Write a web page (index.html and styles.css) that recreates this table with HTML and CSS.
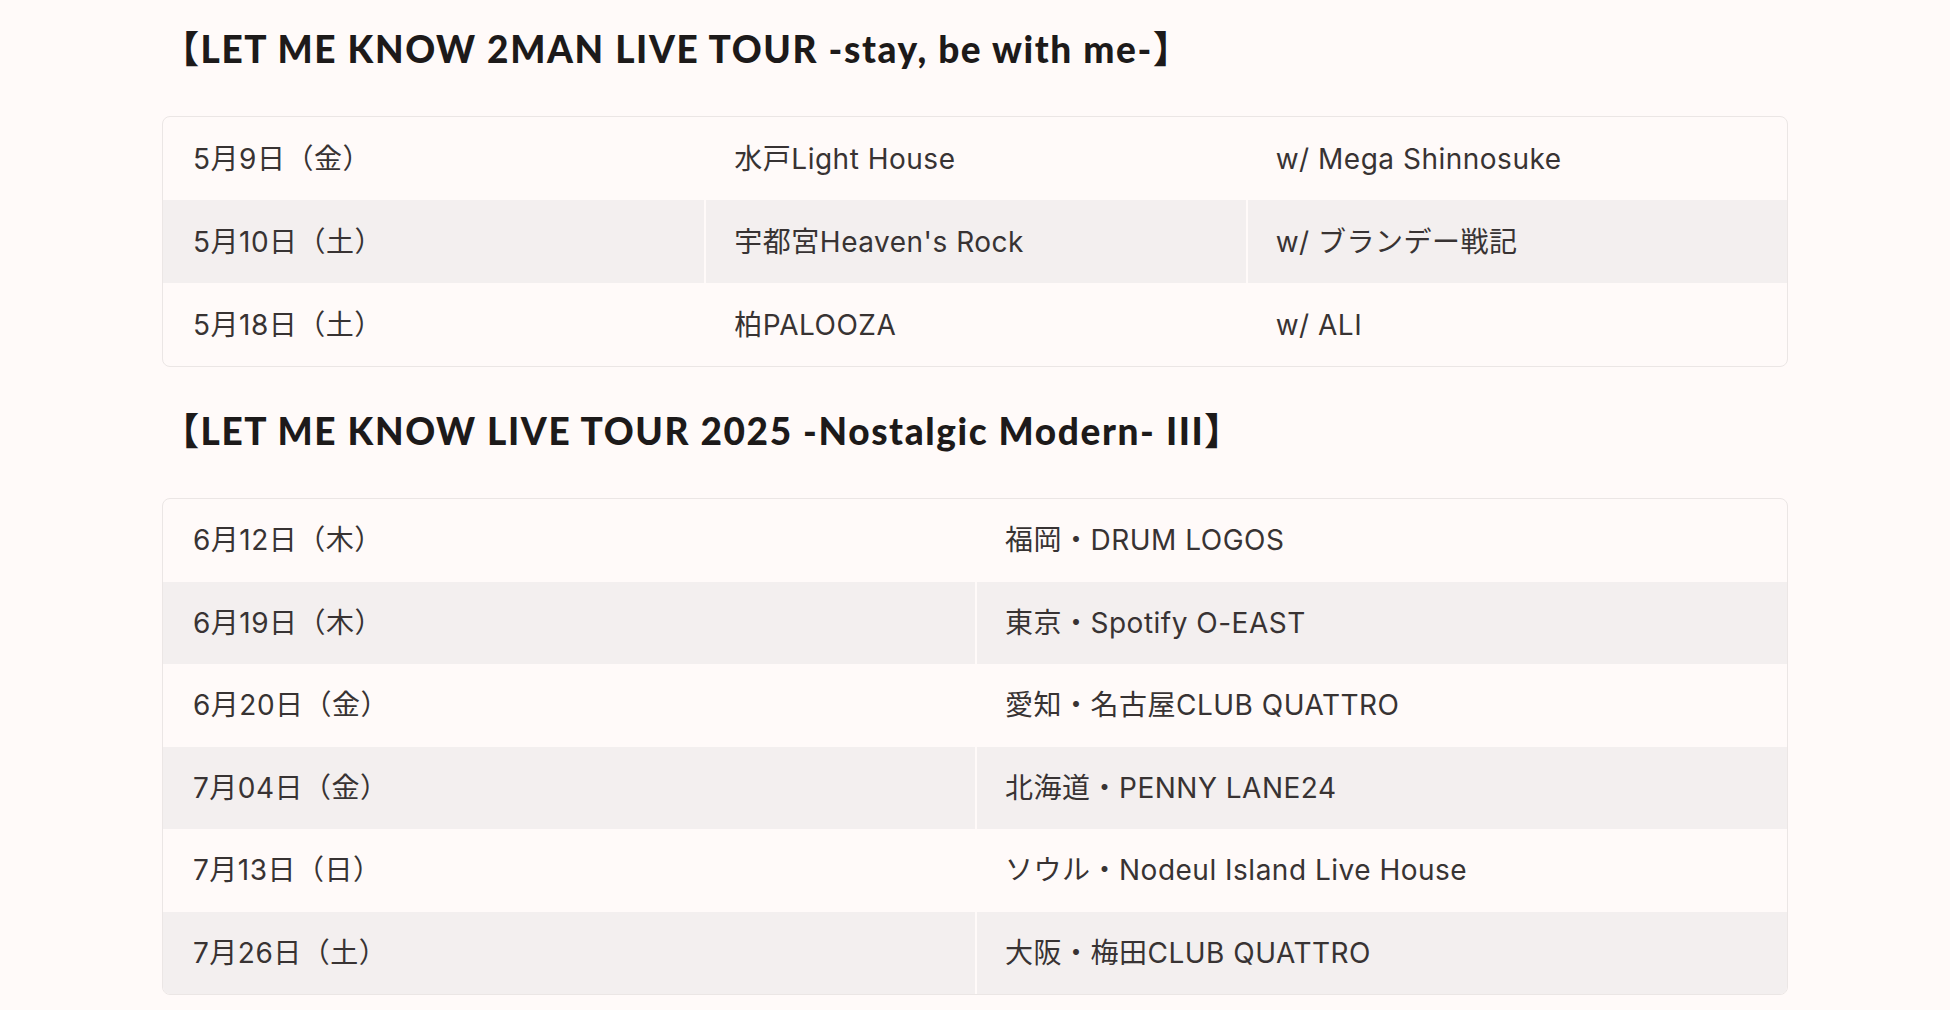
FILE: index.html
```html
<!DOCTYPE html>
<html lang="ja">
<head>
<meta charset="utf-8">
<title>LIVE</title>
<link rel="stylesheet" href="styles.css">
</head>
<body>
<main class="page">
  <section class="tour">
    <h2 class="tour-title">【LET ME KNOW 2MAN LIVE TOUR -stay, be with me-】</h2>
    <table class="schedule cols-3">
      <tbody>
        <tr><td>5月9日（金）</td><td>水戸Light House</td><td>w/ Mega Shinnosuke</td></tr>
        <tr><td>5月10日（土）</td><td>宇都宮Heaven's Rock</td><td>w/ ブランデー戦記</td></tr>
        <tr><td>5月18日（土）</td><td>柏PALOOZA</td><td>w/ ALI</td></tr>
      </tbody>
    </table>
  </section>
  <section class="tour">
    <h2 class="tour-title">【LET ME KNOW LIVE TOUR 2025 -Nostalgic Modern- III】</h2>
    <table class="schedule cols-2">
      <tbody>
        <tr><td>6月12日（木）</td><td>福岡・DRUM LOGOS</td></tr>
        <tr><td>6月19日（木）</td><td>東京・Spotify O-EAST</td></tr>
        <tr><td>6月20日（金）</td><td>愛知・名古屋CLUB QUATTRO</td></tr>
        <tr><td>7月04日（金）</td><td>北海道・PENNY LANE24</td></tr>
        <tr><td>7月13日（日）</td><td>ソウル・Nodeul Island Live House</td></tr>
        <tr><td>7月26日（土）</td><td>大阪・梅田CLUB QUATTRO</td></tr>
      </tbody>
    </table>
  </section>
</main>
</body>
</html>
```

FILE: styles.css
```css
html, body {
  margin: 0;
  padding: 0;
  background: #fffaf9;
}
body {
  font-family: "Inter", "Noto Sans CJK JP", sans-serif;
  color: #383333;
}
.page {
  width: 1626px;
  margin: 0 0 0 162px;
  padding-top: 24px;
}
.tour-title {
  margin: 0 0 42px;
  font-family: "Lato", "Noto Sans CJK JP", sans-serif;
  font-weight: 900;
  font-size: 37px;
  line-height: 50px;
  color: #1d1a1a;
  letter-spacing: 1.6px;
}
.tour + .tour {
  margin-top: 39px;
}
.schedule {
  width: 100%;
  table-layout: fixed;
  border-collapse: separate;
  border-spacing: 0;
  border: 1px solid #ebe6e5;
  border-radius: 8px;
  overflow: hidden;
  font-size: 28px;
  letter-spacing: 0.5px;
}
.schedule td {
  height: 82.5px;
  padding: 0 30px;
  box-sizing: border-box;
  vertical-align: middle;
  line-height: 40px;
}
.cols-3 td {
  height: 83px;
}
.schedule td + td {
  border-left: 2px solid #fffaf9;
  padding-left: 28px;
}
.schedule tr:nth-child(even) td {
  background: #f3efef;
}
```
